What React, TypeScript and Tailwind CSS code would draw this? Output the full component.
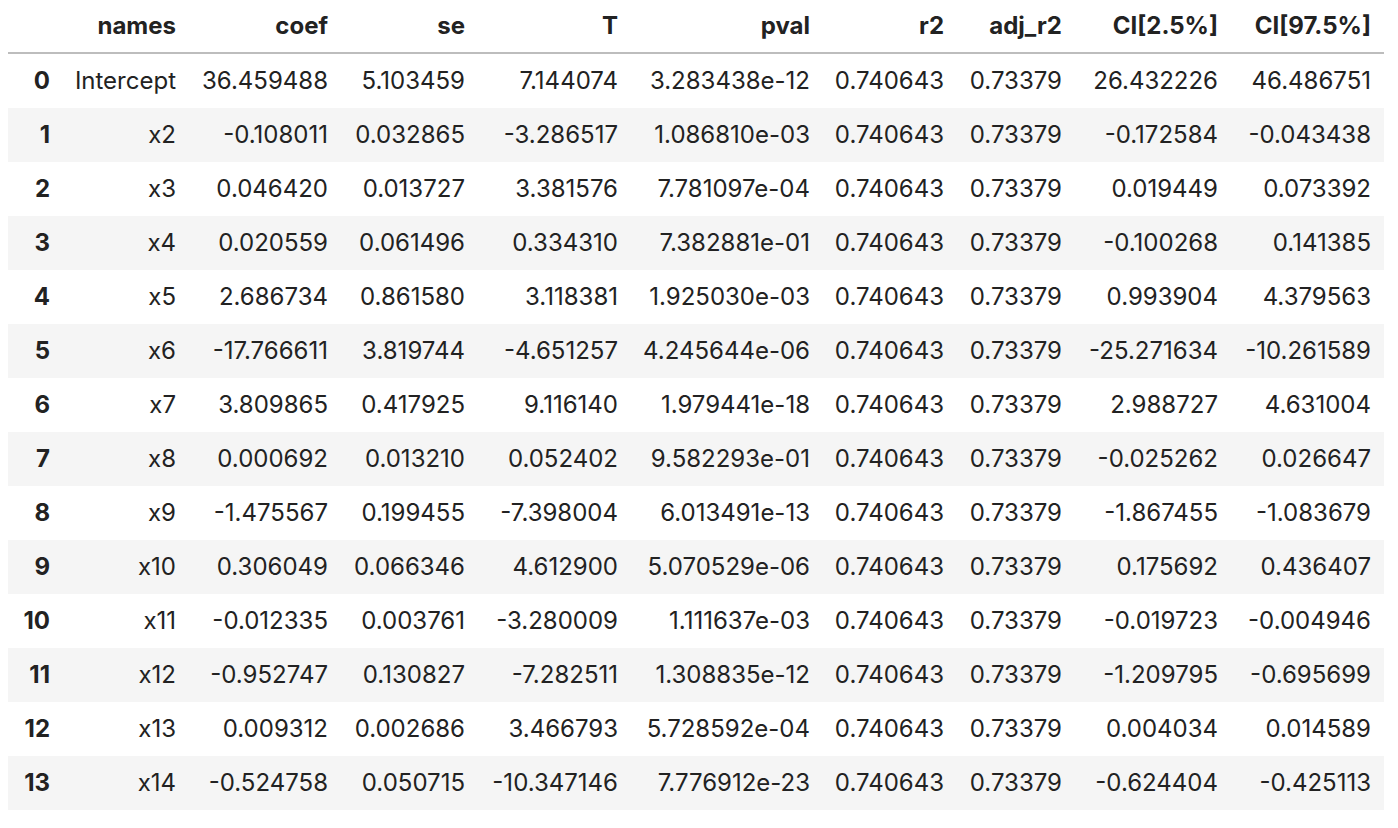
// Regression results table, rendered like a pandas DataFrame in a notebook.

const COLUMNS = ['names', 'coef', 'se', 'T', 'pval', 'r2', 'adj_r2', 'CI[2.5%]', 'CI[97.5%]']

const ROWS: string[][] = [
  ['Intercept', '36.459488', '5.103459', '7.144074', '3.283438e-12', '0.740643', '0.73379', '26.432226', '46.486751'],
  ['x2', '-0.108011', '0.032865', '-3.286517', '1.086810e-03', '0.740643', '0.73379', '-0.172584', '-0.043438'],
  ['x3', '0.046420', '0.013727', '3.381576', '7.781097e-04', '0.740643', '0.73379', '0.019449', '0.073392'],
  ['x4', '0.020559', '0.061496', '0.334310', '7.382881e-01', '0.740643', '0.73379', '-0.100268', '0.141385'],
  ['x5', '2.686734', '0.861580', '3.118381', '1.925030e-03', '0.740643', '0.73379', '0.993904', '4.379563'],
  ['x6', '-17.766611', '3.819744', '-4.651257', '4.245644e-06', '0.740643', '0.73379', '-25.271634', '-10.261589'],
  ['x7', '3.809865', '0.417925', '9.116140', '1.979441e-18', '0.740643', '0.73379', '2.988727', '4.631004'],
  ['x8', '0.000692', '0.013210', '0.052402', '9.582293e-01', '0.740643', '0.73379', '-0.025262', '0.026647'],
  ['x9', '-1.475567', '0.199455', '-7.398004', '6.013491e-13', '0.740643', '0.73379', '-1.867455', '-1.083679'],
  ['x10', '0.306049', '0.066346', '4.612900', '5.070529e-06', '0.740643', '0.73379', '0.175692', '0.436407'],
  ['x11', '-0.012335', '0.003761', '-3.280009', '1.111637e-03', '0.740643', '0.73379', '-0.019723', '-0.004946'],
  ['x12', '-0.952747', '0.130827', '-7.282511', '1.308835e-12', '0.740643', '0.73379', '-1.209795', '-0.695699'],
  ['x13', '0.009312', '0.002686', '3.466793', '5.728592e-04', '0.740643', '0.73379', '0.004034', '0.014589'],
  ['x14', '-0.524758', '0.050715', '-10.347146', '7.776912e-23', '0.740643', '0.73379', '-0.624404', '-0.425113'],
]

// index + 9 data columns, widths measured off the notebook output
const GRID = 'grid grid-cols-[55px_126px_152px_137px_153px_192px_134px_118px_156px_153px]'

export default function App() {
  return (
    <div className="min-h-screen bg-white pl-[8px] font-['Inter','Liberation_Sans',sans-serif] text-[24px] text-[#222222]">
      <div className="w-[1376px]">

        {/* Header */}
        <div className={`${GRID} h-[54px] items-center border-b-2 border-[#bdbdbd] font-bold`}>
          <div />
          {COLUMNS.map(c => (
            <div key={c} className="pr-[13px] text-right whitespace-nowrap">{c}</div>
          ))}
        </div>

        {/* Body — odd rows striped */}
        {ROWS.map((row, i) => (
          <div
            key={i}
            className={`${GRID} h-[54px] items-center ${i % 2 === 1 ? 'bg-[#f5f5f5]' : 'bg-white'}`}
          >
            <div className="pr-[13px] text-right font-bold">{i}</div>
            {row.map((v, j) => (
              <div key={j} className="pr-[13px] text-right whitespace-nowrap">{v}</div>
            ))}
          </div>
        ))}

      </div>
    </div>
  )
}
